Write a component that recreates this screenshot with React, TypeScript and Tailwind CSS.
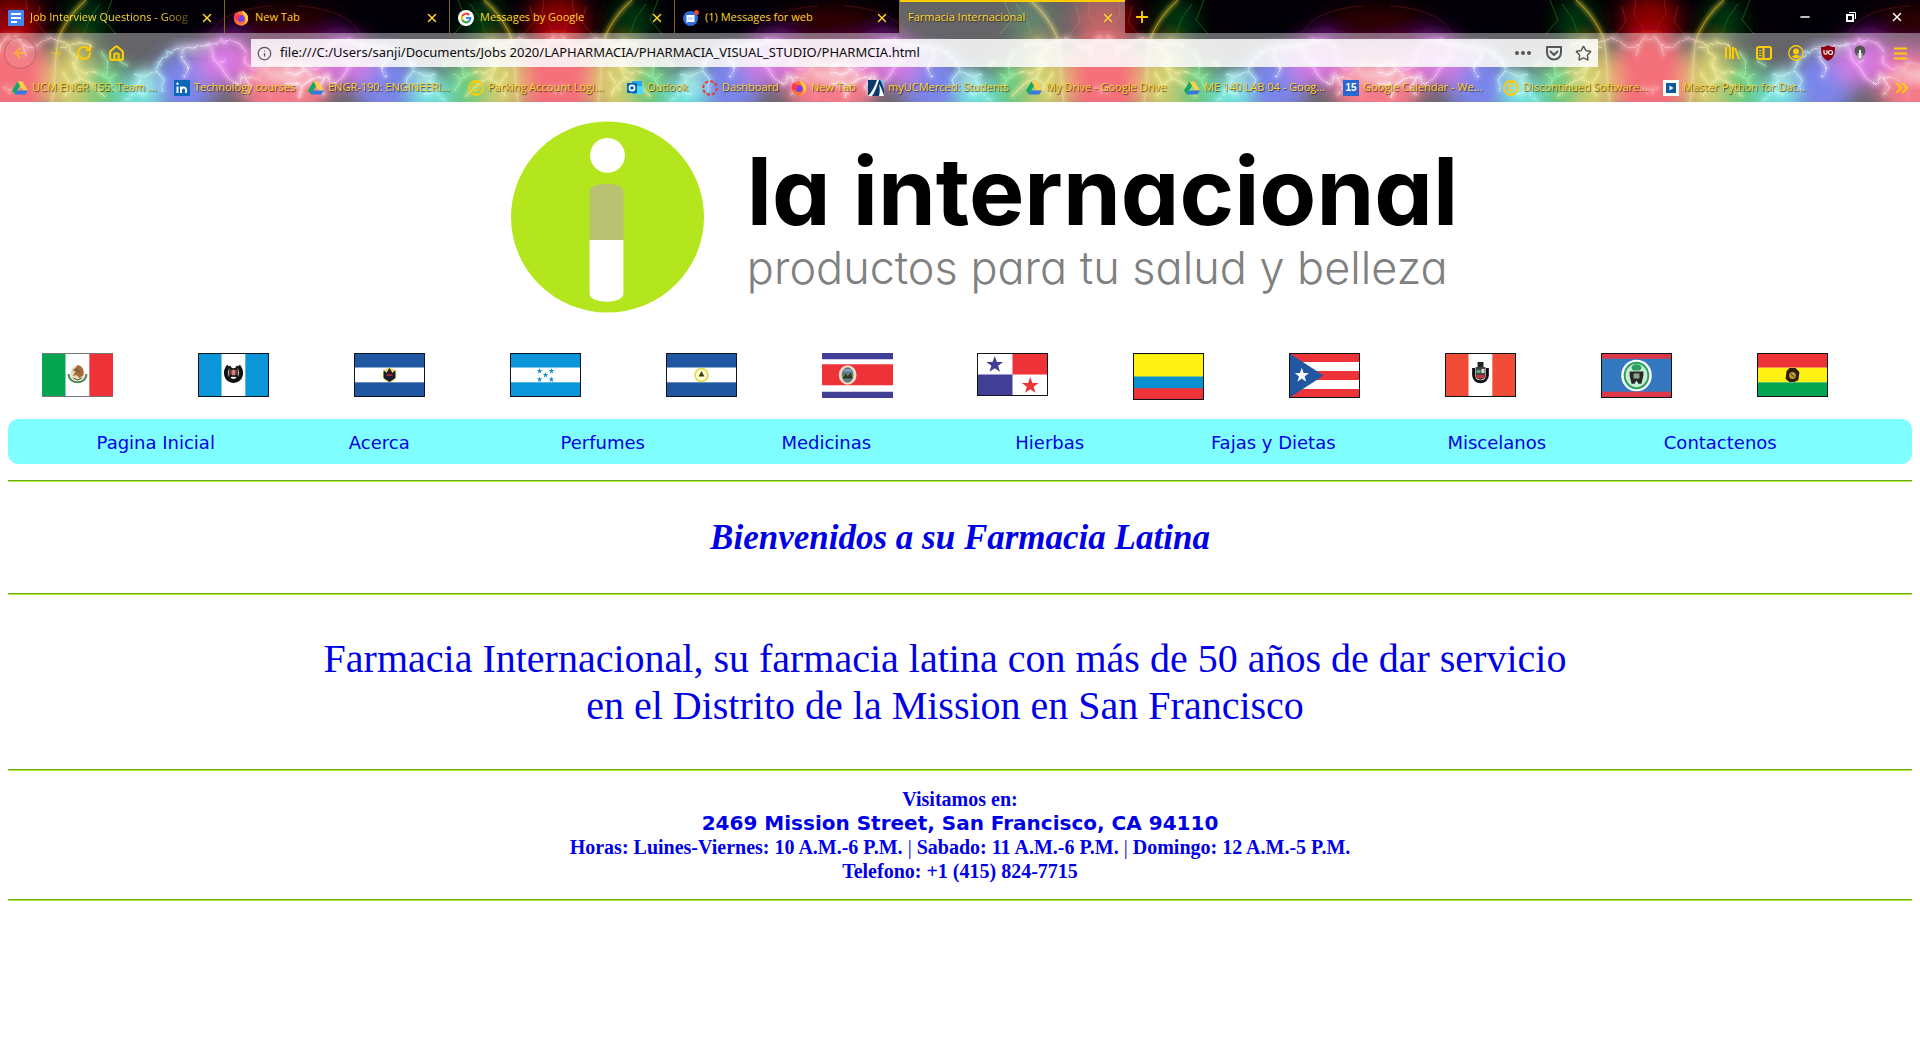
import React from "react";
import { ArrowLeft, ArrowRight, ChevronsRight, Home, Info, Menu, Minus, Plus, RotateCw, Star, X } from "lucide-react";

const STAR = "M0-10 2.4-3.2 9.5-3.1 3.8 1.2 5.9 8.1 0 4-5.9 8.1-3.8 1.2-9.5-3.1-2.4-3.2Z";

/* ---------- browser theme artwork ---------- */

function ThemeArt() {
  return (
    <svg className="absolute inset-0 h-full w-full" aria-hidden="true">
      <defs>
        <filter id="b14" x="-50%" y="-50%" width="200%" height="200%"><feGaussianBlur stdDeviation="10" /></filter>
        <filter id="b6" x="-50%" y="-50%" width="200%" height="200%"><feGaussianBlur stdDeviation="6" /></filter>
        <filter id="b2" x="-20%" y="-20%" width="140%" height="140%"><feGaussianBlur stdDeviation="2" /></filter>
        <filter id="rough" x="-5%" y="-5%" width="110%" height="110%">
          <feTurbulence type="fractalNoise" baseFrequency=".12" numOctaves="3" seed="4" result="n" />
          <feDisplacementMap in="SourceGraphic" in2="n" scale="7" />
        </filter>
        <g id="arch" fill="none">
          <path stroke="#b09a20" d="M74 0C60 12 50 28 46 40" />
          <path stroke="#d8c848" opacity=".7" d="M46 40C42 60 44 80 40 102" />
        </g>
        <g id="faint" fill="none">
          <path stroke="#a01818" d="M14 0 16 14 8 26 4 40M28 6 24 22 34 34" />
          <path stroke="#187020" d="M88 4 78 18 72 34M100 0 92 20 104 34" />
          <path stroke="#5a1020" d="M196 40C200 20 225 8 260 6" />
        </g>
        <g id="bolts" fill="none" strokeLinejoin="round" filter="url(#rough)">
          <path stroke="#ffa0a0" d="M-4 40 6 38 12 46 22 48 34 38 46 40M12 46 14 56M0 92 8 86" />
          <path stroke="#f8e868" d="M46 40 56 44 58 52 66 58 64 68 74 74 84 72M48 48 66 42 80 46M60 60 66 76 80 84 92 96M50 70 58 84 54 98M66 76 60 90" />
          <path stroke="#70f080" d="M84 72 96 78 106 76M88 50 96 62 92 74M96 78 104 92M106 60 116 66" />
          <path stroke="#a0ffff" d="M112 102 122 90 130 78 144 70 150 58 162 50M130 78 120 72M144 70 152 80 150 92M122 90 134 94" />
          <path stroke="#e0e4ff" d="M162 50 172 46 186 48 196 44 206 44M172 46 170 58 176 66 172 78" />
          <path stroke="#ff98ff" d="M196 48 204 42 218 40 228 44 234 52M200 48 202 60 210 68 216 78 224 84M234 52 232 62 242 70 250 66M204 62 214 60" />
          <path stroke="#fff" d="M224 84 232 76 244 78 252 70 262 74 273 72M232 76 238 86 234 96M244 78 256 86 273 82M252 70 258 62 273 66M256 86 258 98" />
        </g>
        <g id="half">
          <g filter="url(#b14)">
            <ellipse cx="0" cy="20" rx="30" ry="26" fill="#8a0000" />
            <ellipse cx="74" cy="24" rx="20" ry="26" fill="#06380a" />
            <ellipse cx="260" cy="22" rx="46" ry="10" fill="#300006" />
            <ellipse cx="2" cy="80" rx="42" ry="44" fill="#f01428" />
            <ellipse cx="60" cy="84" rx="22" ry="40" fill="#b8b010" />
            <ellipse cx="92" cy="92" rx="24" ry="34" fill="#10a828" />
            <ellipse cx="130" cy="98" rx="20" ry="24" fill="#10d8c8" />
            <ellipse cx="172" cy="84" rx="32" ry="34" fill="#2838e0" />
            <ellipse cx="214" cy="60" rx="28" ry="24" fill="#c020d8" />
            <ellipse cx="266" cy="88" rx="38" ry="28" fill="#f02840" />
            <ellipse cx="250" cy="54" rx="26" ry="10" fill="#c02090" />
          </g>
          <ellipse cx="270" cy="76" rx="26" ry="7" fill="#fff" opacity=".6" filter="url(#b6)" />
          <ellipse cx="134" cy="82" rx="12" ry="14" fill="#a0fff8" opacity=".5" filter="url(#b6)" />
          <ellipse cx="180" cy="48" rx="22" ry="5" fill="#d0c8ff" opacity=".5" filter="url(#b6)" />
          <use href="#faint" strokeWidth="1" opacity=".7" />
          <use href="#arch" strokeWidth="3" filter="url(#b2)" />
          <use href="#arch" strokeWidth="1" />
          <use href="#bolts" strokeWidth="5" filter="url(#b2)" opacity=".5" />
          <use href="#bolts" strokeWidth="1" opacity=".75" />
        </g>
        <pattern id="tile" x="12" width="546" height="102" patternUnits="userSpaceOnUse">
          <rect width="546" height="102" fill="#020006" />
          <use href="#half" />
          <use href="#half" transform="translate(546 0) scale(-1 1)" />
        </pattern>
      </defs>
      <rect width="100%" height="102" fill="url(#tile)" />
    </svg>
  );
}

/* ---------- small icons ---------- */

const icon = "h-4 w-4 shrink-0";

const Docs = () => (
  <svg className={icon} viewBox="0 0 16 16"><rect width="16" height="16" rx="1" fill="#4285f4" /><path d="M3 4h10M3 8h10M3 12h6" stroke="#fff" strokeWidth="2" /></svg>
);
const Firefox = () => (
  <svg className={icon} viewBox="0 0 16 16">
    <circle cx="8" cy="8.5" r="7.2" fill="#ff7139" />
    <path d="M9 .5c4 1.500 6.500 5 6 9-.5 3.500-4 6-7 6 4-1 5.500-4 4.500-7C12 6 9.500 5 9 .5Z" fill="#ffd43a" />
    <circle cx="8" cy="8.500" r="3.600" fill="#7542e5" />
    <path d="M.8 8C.8 5 2 3 3 2c0 1.500 1 2 2.500 2.500C7.500 4.500 8 6 7 6.500 5 7 5 9 6 10c-2 1-5 .500-5.200-2Z" fill="#ff3750" />
  </svg>
);
const Google = () => (
  <svg className={icon} viewBox="0 0 16 16">
    <circle cx="8" cy="8" r="8" fill="#fff" />
    <g fill="none" strokeWidth="2.200"><path d="M11.200 5A4.300 4.300 0 0 0 4.300 6" stroke="#ea4335" /><path d="M4.300 6a4.300 4.300 0 0 0 0 4" stroke="#fbbc05" /><path d="M4.300 10a4.300 4.300 0 0 0 6.500 1.300" stroke="#34a853" /><path d="M8 8h4.300a4.300 4.300 0 0 1-1.500 3.300" stroke="#4285f4" /></g>
  </svg>
);
const Messages = () => (
  <svg className={icon} viewBox="0 0 16 16"><circle cx="7.500" cy="8.500" r="7.500" fill="#2a6fe0" /><path d="M3.500 5h8v7h-6.500l-1.500 1Z" fill="#fff" /><path d="M5 7h5v3H5Z" fill="#c7dcff" /><circle cx="13.500" cy="2.500" r="2.500" fill="#ea4335" /></svg>
);
const Drive = () => (
  <svg className={icon} viewBox="0 0 16 16"><path d="M5.500 1.500h5L16 10.500h-5Z" fill="#ffcf48" /><path d="M5.500 1.500 8 6 2.700 14.500 0 10.500Z" fill="#11a861" /><path d="M5.300 10.500H16l-2.700 4H2.700Z" fill="#3777e3" /></svg>
);
const LinkedIn = () => (
  <svg className={icon} viewBox="0 0 16 16"><rect width="16" height="16" rx="1" fill="#0a66b7" /><path d="M3.500 6.500V13M7 6.500V13M7 10c0-3 5-3.500 5 0v3" stroke="#fff" strokeWidth="2" fill="none" /><circle cx="3.500" cy="3.800" r="1.200" fill="#fff" /></svg>
);
const Globe = () => (
  <svg className={icon} viewBox="0 0 16 16" fill="none" stroke="#ffcc00" strokeWidth="1.800"><circle cx="8" cy="8" r="7" /><path d="M4.500 6h7M4.500 10h7M8 2v4M8 10v4" strokeDasharray="2 1" /></svg>
);
const Outlook = () => (
  <svg className={icon} viewBox="0 0 16 16"><path d="M5 1h10v13H5Z" fill="#28a8ea" /><path d="M9 6h7v8H9Z" fill="#50d9ff" /><rect y="3" width="10" height="10" fill="#0364b8" /><circle cx="5" cy="8" r="2.600" fill="none" stroke="#fff" strokeWidth="1.600" /></svg>
);
const Canvas = () => (
  <svg className={icon} viewBox="0 0 16 16" fill="none" stroke="#e0402c"><circle cx="8" cy="8" r="6.800" strokeWidth="2" strokeDasharray="3.500 1.800" /></svg>
);
const Merced = () => (
  <svg className={icon} viewBox="0 0 16 16"><rect width="16" height="16" fill="#0b3a6f" /><path d="M0 16C4 12 7 6 9 0h2C9 6 7 12 4 16Z" fill="#fff" /><path d="M11 4c2 3 4 8 5 12h-5c1-4 1-8 0-12Z" fill="#fff" /><path d="M12 0h4v10c-1-4-2-7-4-10Z" fill="#8ab8e0" /></svg>
);
const Calendar = () => (
  <span className="flex h-4 w-4 shrink-0 items-center justify-center bg-[#2a66d0] font-['Liberation_Sans',sans-serif] text-[10px] font-bold text-white [text-shadow:none]">15</span>
);
const Play = () => (
  <svg className={icon} viewBox="0 0 16 16"><rect width="16" height="16" fill="#fff" /><rect x="3" y="3" width="10" height="10" fill="#0a5a9c" /><path d="m6.500 5.500 4 2.500-4 2.500Z" fill="#fff" /></svg>
);
const Library = () => (
  <svg className={icon} viewBox="0 0 16 16" stroke="#ffcc00" strokeWidth="2"><path d="M2 2v12M6 2v12M9 2v12M11 3l4 11" /></svg>
);
const Sidebar = () => (
  <svg className={icon} viewBox="0 0 16 16" fill="none" stroke="#ffcc00" strokeWidth="2"><rect x="1" y="2" width="14" height="12" rx="2" /><path d="M7.500 2v12" /><path d="M3 5.500h2.500M3 8h2.500M3 10.500h2.500" strokeWidth="1" /></svg>
);
const Account = () => (
  <svg className={icon} viewBox="0 0 16 16"><circle cx="8" cy="8" r="7.200" fill="none" stroke="#ffcc00" strokeWidth="1.400" /><circle cx="8" cy="6.500" r="3" fill="#ffcc00" /><path d="M4 11.500c2-2 6-2 8 0-2 2-6 2-8 0Z" fill="#ffcc00" /></svg>
);
const Shield = () => (
  <svg className={icon} viewBox="0 0 16 16"><path d="M8 0c2 1.500 4 2 7 2 0 7-1 11-7 14C2 13 1 9 1 2c3 0 5-.500 7-2Z" fill="#900010" /><path d="M4 5v3c0 1.500 3 1.500 3 0V5M10.500 5.500a1.800 1.800 0 1 1 0 4 1.800 1.800 0 0 1 0-4Z" fill="none" stroke="#fff" strokeWidth="1.200" /></svg>
);
const Bulb = () => (
  <svg className={icon} viewBox="0 0 16 16"><circle cx="8" cy="6" r="5.500" fill="#555" /><path d="M5.500 8h5v7h-5Z" fill="#aaa" /><path d="M8 5v8" stroke="#eee" strokeWidth="2" /></svg>
);
const Pocket = () => (
  <svg className="h-[18px] w-[18px] shrink-0" viewBox="0 0 18 18" fill="none" stroke="#55555a" strokeWidth="2" strokeLinecap="round" strokeLinejoin="round"><path d="M2 3h14v5.500a7 7 0 0 1-14 0Z" /><path d="m5.500 7.500 3.500 3.500 3.500-3.500" /></svg>
);

/* ---------- browser chrome ---------- */

const tabs = [
  { title: "Job Interview Questions - Goog", icon: <Docs />, fade: true },
  { title: "New Tab", icon: <Firefox /> },
  { title: "Messages by Google", icon: <Google /> },
  { title: "(1) Messages for web", icon: <Messages /> },
  { title: "Farmacia Internacional", icon: null, active: true },
];

const bookmarks = [
  { label: "UCM ENGR 155: Team ...", icon: <Drive />, width: "w-[162px]" },
  { label: "Technology courses", icon: <LinkedIn />, width: "w-[134px]" },
  { label: "ENGR-190: ENGINEERI...", icon: <Drive />, width: "w-[160px]" },
  { label: "Parking Account Logi...", icon: <Globe />, width: "w-[159px]" },
  { label: "Outlook", icon: <Outlook />, width: "w-[75px]" },
  { label: "Dashboard", icon: <Canvas />, width: "w-[89px]" },
  { label: "New Tab", icon: <Firefox />, width: "w-[77px]" },
  { label: "myUCMerced: Students", icon: <Merced />, width: "w-[158px]" },
  { label: "My Drive - Google Drive", icon: <Drive />, width: "w-[158px]" },
  { label: "ME 140 LAB 04 - Goog...", icon: <Drive />, width: "w-[159px]" },
  { label: "Google Calendar - We...", icon: <Calendar />, width: "w-[160px]" },
  { label: "Discontinued Software...", icon: <Globe />, width: "w-[160px]" },
  { label: "Master Python for Dat...", icon: <Play />, width: "w-[160px]" },
];

function BrowserChrome() {
  return (
    <header className="relative h-[102px] overflow-hidden font-['Open_Sans','Noto_Sans',sans-serif] text-[11px] text-[#ffd52e]">
      <ThemeArt />
      <div className="relative flex h-full flex-col">
        <div className="flex h-[33px] items-stretch">
          {tabs.map((t) => (
            <div
              key={t.title}
              className={
                t.active
                  ? "flex w-[225px] items-center gap-1.5 border-t-2 border-[#ffcc00] bg-[#f9f9fa]/40 pr-2.5 pl-2 [text-shadow:1px_1px_1px_#0008]"
                  : "flex w-[225px] items-center gap-1.5 border-r border-[#806a10] pt-0.5 pr-2.5 pl-2"
              }
            >
              {t.icon}
              <span className={t.fade ? "flex-1 whitespace-nowrap [mask-image:linear-gradient(to_right,#000_80%,#0004_98%)]" : "flex-1 whitespace-nowrap"}>{t.title}</span>
              <button aria-label={`Close ${t.title}`}><X size={14} strokeWidth={2.500} /></button>
            </div>
          ))}
          <button aria-label="Open a new tab" className="ml-2"><Plus size={18} strokeWidth={2.500} color="#ffcc00" /></button>
          <div className="ml-auto flex items-center gap-8 pr-4 text-white">
            <button aria-label="Minimize"><Minus size={14} strokeWidth={2.500} /></button>
            <button aria-label="Restore">
              <svg width="14" height="14" viewBox="0 0 14 14" fill="none" stroke="currentColor"><path d="M3 5h6v6H3Z" strokeWidth="2" /><path d="M5 2.500h6.500V9" /></svg>
            </button>
            <button aria-label="Close window"><X size={14} strokeWidth={2.500} /></button>
          </div>
        </div>

        <div className="flex flex-1 flex-col bg-[#f9f9fa]/40 [text-shadow:1px_1px_1px_#000a]">
          <div className="flex h-[40px] items-center text-[#ffcc00]">
            <div className="flex w-[251px] items-center pl-1">
              <button aria-label="Back" className="flex h-8 w-8 items-center justify-center rounded-full border border-[#a0505080] bg-white/10"><ArrowLeft size={16} strokeWidth={3} className="opacity-60" /></button>
              <button aria-label="Forward" className="ml-3 opacity-40"><ArrowRight size={16} strokeWidth={3} /></button>
              <button aria-label="Reload" className="ml-3"><RotateCw size={16} strokeWidth={3} /></button>
              <button aria-label="Home" className="ml-4"><Home size={17} strokeWidth={3} /></button>
            </div>
            <div className="flex h-7 flex-1 items-center gap-3 bg-white/85 pr-1.5 pl-1.5 text-[#55555a]">
              <Info size={15} />
              <input
                aria-label="Address"
                readOnly
                value="file:///C:/Users/sanji/Documents/Jobs 2020/LAPHARMACIA/PHARMACIA_VISUAL_STUDIO/PHARMCIA.html"
                className="-ml-1 min-w-0 flex-1 bg-transparent font-['Noto_Sans',sans-serif] text-[13px] text-[#0c0c0d] outline-none [text-shadow:none]"
              />
              <button aria-label="Page actions" className="mr-0.5">
                <svg width="16" height="16" viewBox="0 0 16 16" fill="currentColor"><circle cx="2" cy="8" r="2" /><circle cx="8" cy="8" r="2" /><circle cx="14" cy="8" r="2" /></svg>
              </button>
              <button aria-label="Save to Pocket"><Pocket /></button>
              <button aria-label="Bookmark this page"><Star size={17} strokeWidth={2} /></button>
            </div>
            <div className="flex w-[322px] items-center justify-end gap-4 pr-[11px]">
              <button aria-label="Library"><Library /></button>
              <button aria-label="Sidebars"><Sidebar /></button>
              <button aria-label="Account"><Account /></button>
              <button aria-label="uBlock Origin"><Shield /></button>
              <button aria-label="Extension"><Bulb /></button>
              <button aria-label="Open menu" className="ml-2"><Menu size={17} strokeWidth={3} /></button>
            </div>
          </div>
          <nav aria-label="Bookmarks" className="flex h-[29px] items-center pl-3">
            {bookmarks.map((b, i) => (
              <a key={i} href="#bookmark" className={`flex shrink-0 items-center gap-1 ${b.width}`}>
                {b.icon}
                <span className="whitespace-nowrap">{b.label}</span>
              </a>
            ))}
            <button aria-label="More bookmarks" className="mr-2 ml-auto"><ChevronsRight size={20} strokeWidth={2.500} color="#ffcc00" /></button>
          </nav>
        </div>
      </div>
    </header>
  );
}

/* ---------- flags (72 x 44 artwork) ---------- */

type FlagProps = { name: string; h?: string; border?: boolean; children: React.ReactNode };

function Flag({ name, h = "h-11", border = true, children }: FlagProps) {
  return (
    <svg role="img" aria-label={name} viewBox="0 0 72 44" preserveAspectRatio="none" className={`w-[71px] ${h}`}>
      {children}
      {border && <rect x=".5" y=".5" width="71" height="43" fill="none" stroke="#10141c" />}
    </svg>
  );
}

const Bands = ({ c, vertical }: { c: string[]; vertical?: boolean }) => (
  <>
    {c.map((fill, i) =>
      vertical ? (
        <rect key={i} x={(i * 72) / c.length} width={72 / c.length + 0.1} height="44" fill={fill} />
      ) : (
        <rect key={i} y={(i * 44) / c.length} width="72" height={44 / c.length + 0.1} fill={fill} />
      ),
    )}
  </>
);

const flags = [
  <Flag name="Mexico" border={false}>
    <Bands vertical c={["#06a551", "#fff", "#ee3338"]} />
    <path d="M0 .5H72M0 43.500H72" stroke="#777" />
    <ellipse cx="36" cy="21" rx="7" ry="8.500" fill="#e8dcc0" />
    <path d="M27 21c0 11 18 11 18 0" fill="none" stroke="#4c8a58" strokeWidth="2" />
    <path d="M36 12c5 1 7 5 6 10l-4 3-3-3-4 1 3-4-3-2 3-2Z" fill="#a56a38" />
    <path d="m32 25 4 2 4-2M34 16l4 3" stroke="#3a5a30" fill="none" />
  </Flag>,
  <Flag name="Guatemala">
    <Bands vertical c={["#0a96d8", "#fff", "#0a96d8"]} />
    <path d="M31 13c-5 6-3 14 5 15 8-1 10-9 5-15" fill="none" stroke="#111" strokeWidth="4" />
    <path d="M31 15h10v9H31Z" fill="#4a3a3a" /><path d="m32 13 8 12M40 13l-8 12" stroke="#111" strokeWidth="1.500" /><path d="M34 17h4v5h-4Z" fill="#e07a70" />
  </Flag>,
  <Flag name="El Salvador">
    <Bands c={["#2057a0", "#fff", "#2057a0"]} />
    <circle cx="36" cy="22" r="7" fill="#f0d850" /><path d="M30 17v8l6 4 6-4v-8l-3 3-3-5-3 5Z" fill="#1a1a30" /><path d="M33 22h6" stroke="#c03030" strokeWidth="1.500" />
  </Flag>,
  <Flag name="Honduras">
    <Bands c={["#0a96d8", "#fff", "#0a96d8"]} />
    {[[30, 18], [42, 18], [36, 22], [30, 26.5], [42, 26.5]].map(([x, y]) => (
      <path key={`${x}-${y}`} d={STAR} fill="#1590c8" transform={`translate(${x} ${y}) scale(.3)`} />
    ))}
  </Flag>,
  <Flag name="Nicaragua">
    <Bands c={["#2057a0", "#fff", "#2057a0"]} />
    <circle cx="36" cy="22" r="6.500" fill="#fffbd0" stroke="#e0d840" strokeWidth="1.600" /><path d="m36 18 3 5.500h-6Z" fill="#3a4010" />
  </Flag>,
  <Flag name="Costa Rica" h="h-[45px]" border={false}>
    <rect width="72" height="44" fill="#413f95" /><path d="M0 6h72v32H0Z" fill="#fff" /><path d="M0 11h72v20.500H0Z" fill="#ee3338" />
    <ellipse cx="26" cy="21.500" rx="9" ry="9.500" fill="#f0e0c8" /><ellipse cx="26" cy="21.500" rx="6" ry="7.500" fill="#6a7a78" /><path d="m21 25 3-5 2 3 3-4 2 6Z" fill="#2a3a20" /><path d="M22 17h8" stroke="#7aa8d8" strokeWidth="2" />
  </Flag>,
  <Flag name="Panama" h="h-[43px]">
    <rect width="72" height="44" fill="#fff" /><path d="M36 0h36v22H36Z" fill="#ee3338" /><path d="M0 22h36v22H0Z" fill="#413f95" />
    <path d={STAR} fill="#413f95" transform="translate(18 12) scale(.9)" /><path d={STAR} fill="#ee3338" transform="translate(54 33.500) scale(.9)" />
  </Flag>,
  <Flag name="Colombia" h="h-[47px]">
    <rect width="72" height="44" fill="#fff212" /><path d="M0 22h72v12H0Z" fill="#0a90d0" /><path d="M0 33h72v11H0Z" fill="#ee3338" />
  </Flag>,
  <Flag name="Puerto Rico" h="h-[45px]">
    <Bands c={["#ee3338", "#fff", "#ee3338", "#fff", "#ee3338"]} />
    <path d="M0 0 35 22 0 44Z" fill="#2057a0" /><path d={STAR} fill="#fff" transform="translate(13 22) scale(.75)" />
  </Flag>,
  <Flag name="Peru">
    <Bands vertical c={["#f04c38", "#fff", "#f04c38"]} />
    <path d="M29 15v7c0 9 14 9 14 0v-7" fill="none" stroke="#111" strokeWidth="3" /><rect x="33" y="9" width="6" height="5" fill="#222" />
    <path d="M31 14h10v10q-5 6-10 0Z" fill="#444" /><path d="M32 17h4v3h-4Z" fill="#58a878" /><path d="M32 22h8v3h-8Z" fill="#d03038" /><path d="M37 16h3v4h-3Z" fill="#ddd" />
  </Flag>,
  <Flag name="Belize" h="h-[45px]">
    <rect width="72" height="44" fill="#3478c0" /><path d="M0 0h72v5.500H0ZM0 38h72v6H0Z" fill="#dc3848" />
    <ellipse cx="36" cy="22" rx="15.500" ry="15.500" fill="#fff" /><ellipse cx="36" cy="22" rx="12" ry="12.500" fill="#c8ecd4" stroke="#28a060" strokeWidth="2" />
    <path d="M36 11c6 0 6 5 3 6h-6c-3-1-3-6 3-6Z" fill="#28a060" /><path d="M29 18h14v4l-2 8h-3l-2-3-2 3h-3l-2-8Z" fill="#282828" /><path d="M33 20h6v5h-6Z" fill="#88a888" />
  </Flag>,
  <Flag name="Bolivia">
    <Bands c={["#ee3338", "#fff212", "#06a551"]} />
    <path d="m30 18 3-3h6l4 4-1 8-4 2h-5l-4-3Z" fill="#2a1c08" /><circle cx="36" cy="22.500" r="3.500" fill="#c09828" /><path d="m34 21 4 3" stroke="#403010" />
  </Flag>,
];

/* ---------- page ---------- */

const links = ["Pagina Inicial", "Acerca", "Perfumes", "Medicinas", "Hierbas", "Fajas y Dietas", "Miscelanos", "Contactenos"];

const Rule = () => <hr className="h-0.5 border-t border-b border-t-[#6aa820] border-b-[#adf03c]" />;

function Logo() {
  return (
    <div className="flex items-start justify-center gap-[43px] pt-[19px] pl-[49px]">
      <svg role="img" aria-label="La Internacional" className="h-48 w-[193px] shrink-0" viewBox="0 0 194 192">
        <ellipse cx="97" cy="96" rx="97" ry="96" fill="#b4e61e" />
        <circle cx="97" cy="34" r="17.500" fill="#fff" />
        <path d="M79 120V70C79 60 113 60 113 70v50Z" fill="#b9c173" />
        <path d="M79 119h34v54c0 11-34 11-34 0Z" fill="#fff" />
      </svg>
      <div className="pt-[22px] font-[Inter,sans-serif] whitespace-nowrap [font-feature-settings:'cv11','ss03']">
        <h1 className="text-[93px] leading-[96px] font-bold text-black">la internacional</h1>
        <p className="text-[45px] leading-[58px] font-light text-[#808080]">productos para tu salud y belleza</p>
      </div>
    </div>
  );
}

export default function App() {
  return (
    <div className="min-h-screen bg-white">
      <BrowserChrome />
      <main className="font-['Liberation_Serif',serif] text-[#0000e6]">
        <Logo />
        <ul className="mt-10 grid h-[66px] grid-cols-12 items-start justify-items-center pr-[50px]">
          {flags.map((f, i) => (
            <li key={i}>{f}</li>
          ))}
        </ul>
        <div className="px-2">
          <nav aria-label="Principal" className="rounded-[10px] bg-[#7fffff] pr-20 pl-9">
            <ul className="grid h-[45px] grid-cols-8 items-center pt-0.5 text-center font-['DejaVu_Sans',sans-serif] text-[18px]">
              {links.map((l) => (
                <li key={l}><a href="#seccion">{l}</a></li>
              ))}
            </ul>
          </nav>
          <div className="h-4" />
          <Rule />
          <h2 className="py-[34px] text-center text-[35px] leading-[43px] font-bold italic">Bienvenidos a su Farmacia Latina</h2>
          <Rule />
          <p className="py-10 pr-[30px] text-center text-[40px] leading-[47px]">
            Farmacia Internacional, su farmacia latina con más de 50 años de dar servicio
            <br />
            en el Distrito de la Mission en San Francisco
          </p>
          <Rule />
          <address className="py-4 text-center text-[20px] leading-6 font-bold not-italic">
            <p>Visitamos en:</p>
            <p className="font-['DejaVu_Sans',sans-serif]">2469 Mission Street, San Francisco, CA 94110</p>
            <p>
              Horas: Luines-Viernes: 10 A.M.-6 P.M. <span className="font-normal">|</span> Sabado: 11 A.M.-6 P.M.{" "}
              <span className="font-normal">|</span> Domingo: 12 A.M.-5 P.M.
            </p>
            <p>Telefono: +1 (415) 824-7715</p>
          </address>
          <Rule />
        </div>
      </main>
    </div>
  );
}
